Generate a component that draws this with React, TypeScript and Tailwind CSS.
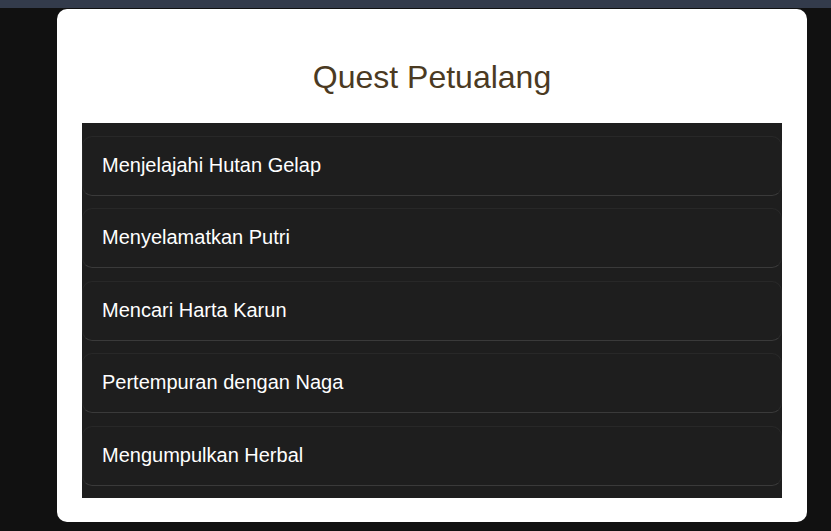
import React from "react";

const quests = [
  "Menjelajahi Hutan Gelap",
  "Menyelamatkan Putri",
  "Mencari Harta Karun",
  "Pertempuran dengan Naga",
  "Mengumpulkan Herbal",
];

const App: React.FC = () => {
  return (
    <div className="min-h-screen w-full bg-[#111111] font-['Liberation_Sans',Arial,sans-serif]">
      <div className="h-2 w-full bg-[#333b4b]" />
      <div className="pt-px">
        <div className="ml-[57px] w-[750px] rounded-[10px] bg-white px-[25px] pt-[25px] pb-[24px]">
          <h1 className="mt-[25px] mb-[27px] text-center text-[32px] leading-[37px] text-[#4b3a22]">
            Quest Petualang
          </h1>
          <ul className="flex flex-col gap-[12.5px] bg-[#1e1e1e] py-[12.5px]">
            {quests.map((q) => (
              <li
                key={q}
                className="flex h-[60px] items-center rounded-[10px] border border-[#282828] border-b-[#3a3a3a] pb-[2px] pl-[19px] text-[20px] text-white"
              >
                {q}
              </li>
            ))}
          </ul>
        </div>
      </div>
    </div>
  );
};

export default App;
